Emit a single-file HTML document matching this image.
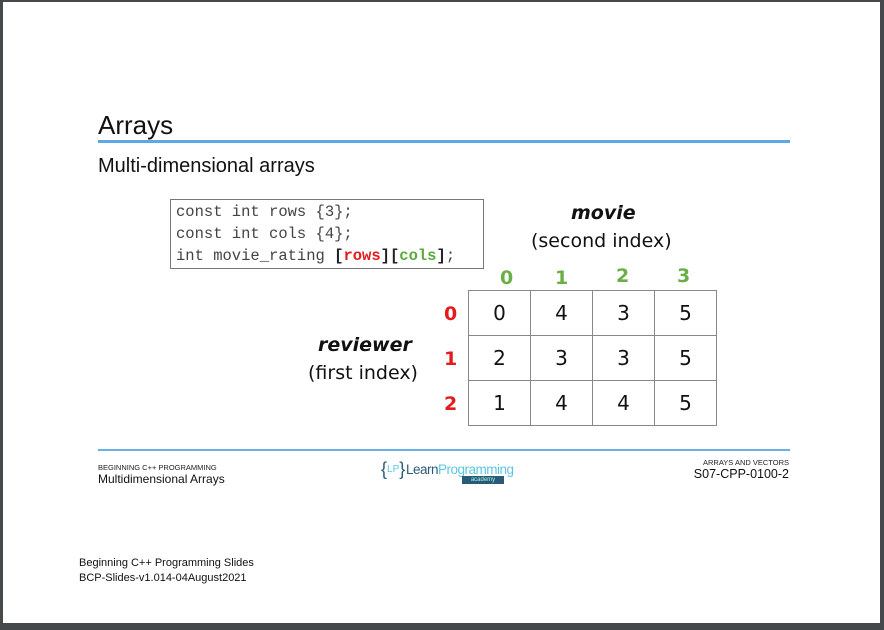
<!DOCTYPE html>
<html><head><meta charset="utf-8"><style>
body{margin:0;width:884px;height:630px;background:#46494c;position:relative;overflow:hidden;font-family:"Liberation Sans",sans-serif;}
.page{position:absolute;left:3px;top:2px;width:877px;height:621px;background:#fff;}
.a{position:absolute;white-space:nowrap;}
.cal{font-family:"DejaVu Sans","Liberation Sans",sans-serif;}
table{position:absolute;left:468px;top:290px;border-collapse:collapse;}
td{width:61px;height:44px;border:1px solid #888;text-align:center;font-size:20px;font-family:"DejaVu Sans",sans-serif;color:#111;padding:0;}
</style></head><body>
<div class="page"></div>
<div class="a" style="left:98px;top:110px;font-size:26px;color:#111">Arrays</div>
<div class="a" style="left:98px;top:140px;width:692px;height:3px;background:#5aa9e6"></div>
<div class="a" style="left:98px;top:155px;font-size:20px;color:#111">Multi-dimensional arrays</div>
<div class="a" style="left:170px;top:199px;width:312px;height:68px;border:1px solid #777;"></div>
<div class="a" style="left:176px;top:201px;font-family:'Liberation Mono',monospace;font-size:15.5px;line-height:22px;color:#444">const int rows {3};<br>const int cols {4};<br>int movie_rating <b style="color:#222">[</b><b style="color:#e31b1b">rows</b><b style="color:#222">][</b><b style="color:#5aaa3c">cols</b><b style="color:#222">]</b>;</div>
<div class="a cal" style="left:571px;top:202px;font-size:19px;font-weight:bold;font-style:italic;color:#111">movie</div>
<div class="a cal" style="left:531px;top:230px;font-size:19px;color:#111">(second index)</div>
<div class="a cal" style="left:318px;top:334px;font-size:19px;font-weight:bold;font-style:italic;color:#111">reviewer</div>
<div class="a cal" style="left:308px;top:362px;font-size:19px;color:#111">(first index)</div>
<div class="a cal" style="left:500px;top:267px;font-size:19px;font-weight:bold;color:#6aaf45">0</div>
<div class="a cal" style="left:555px;top:267px;font-size:19px;font-weight:bold;color:#6aaf45">1</div>
<div class="a cal" style="left:616px;top:265px;font-size:19px;font-weight:bold;color:#6aaf45">2</div>
<div class="a cal" style="left:677px;top:265px;font-size:19px;font-weight:bold;color:#6aaf45">3</div>
<div class="a cal" style="left:444px;top:303px;font-size:19px;font-weight:bold;color:#e31b1b">0</div>
<div class="a cal" style="left:444px;top:348px;font-size:19px;font-weight:bold;color:#e31b1b">1</div>
<div class="a cal" style="left:444px;top:393px;font-size:19px;font-weight:bold;color:#e31b1b">2</div>
<table>
<tr><td>0</td><td>4</td><td>3</td><td>5</td></tr>
<tr><td>2</td><td>3</td><td>3</td><td>5</td></tr>
<tr><td>1</td><td>4</td><td>4</td><td>5</td></tr>
</table>
<div class="a" style="left:98px;top:449px;width:692px;height:2px;background:#6ab0e8"></div>
<div class="a" style="left:98px;top:463px;font-size:7.5px;color:#222">BEGINNING C++ PROGRAMMING</div>
<div class="a" style="left:98px;top:472px;font-size:12px;color:#111">Multidimensional Arrays</div>
<div class="a" style="right:95px;top:458px;font-size:7.5px;color:#222">ARRAYS AND VECTORS</div>
<div class="a" style="right:95px;top:467px;font-size:12.5px;color:#111">S07-CPP-0100-2</div>
<div class="a" style="left:381px;top:459px;font-size:18px;color:#2a5a78">{<span style="font-size:10px;color:#5cc6e0;vertical-align:3px">LP</span>}</div>
<div class="a" style="left:406px;top:462px;font-size:13.5px;letter-spacing:-0.5px;color:#2a5a78">Learn<span style="color:#5cc6e0">Programming</span></div>
<div class="a" style="left:462px;top:476px;width:42px;height:8px;background:#2a5a78;color:#9fd;font-size:6px;line-height:8px;text-align:center">academy</div>
<div class="a" style="left:79px;top:557px;font-size:11px;color:#111">Beginning C++ Programming Slides</div>
<div class="a" style="left:79px;top:572px;font-size:11px;color:#111">BCP-Slides-v1.014-04August2021</div>
</body></html>
